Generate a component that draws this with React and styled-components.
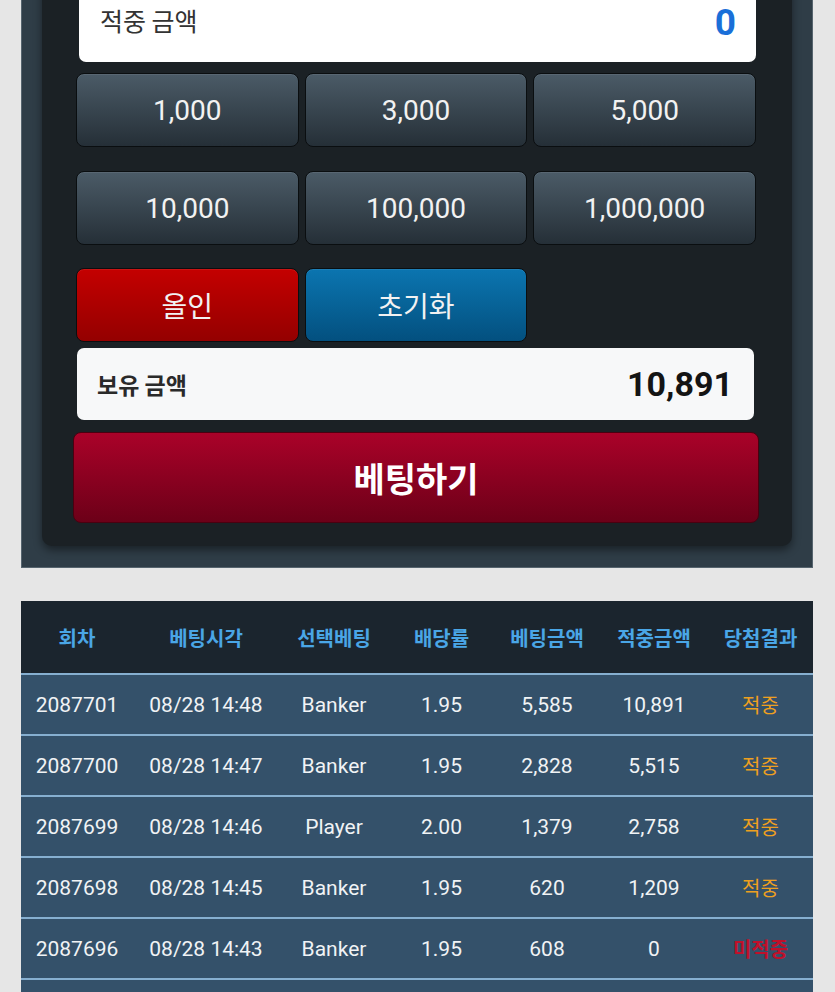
import React from 'react'
import styled, { createGlobalStyle } from 'styled-components';

const GlobalStyle = createGlobalStyle`
html, body {
  margin: 0;
  padding: 0;
  background: #e6e6e6;
}
body {
  font-family: Roboto, 'Noto Sans CJK KR', sans-serif;
}
`;

const Page = styled.div`
display : flex;
flex-direction: column;
gap : 33px;
padding : 0 22px 0 21px;
margin-top : -58px;
`;

const OuterPanel = styled.div`
background: #2f3d47;
border: 1px solid #56646e;
border-top: none;
padding : 20px 20px 21px 20px;
`;

const InnerPanel = styled.div`
display : flex;
flex-direction: column;
background: #1b2125;
border-radius: 0 0 10px 10px;
box-shadow: 0 4px 8px rgba(0,0,0,0.45);
padding : 20px 36px 23px 34px;
`;

const WinBox = styled.div`
display : flex;
align-items : center;
justify-content : space-between;
height : 80px;
margin-left : 3px;
background: #FFFFFF;
border-radius: 0 0 7px 7px;
padding : 0 20px 0 21px;
box-sizing : border-box;
`;

const WinLabel = styled.div`
font-family: 'Noto Sans CJK KR', sans-serif;
font-size: 25px;
color: #333333;
margin-top : -4px;
`;

const WinValue = styled.div`
font-family: Roboto, sans-serif;
font-weight: 700;
font-size: 37px;
color: #1a6fd8;
`;

const ChipGrid = styled.div`
display : grid;
grid-template-columns: repeat(3, 1fr);
gap : 6px;
margin-top : ${p => p.$top}px;
`;

const ChipButton = styled.button`
height : 74px;
border: 1px solid #0a0e10;
border-radius: 8px;
background: ${p => p.$tone === 'red'
  ? 'linear-gradient(#c40000, #940000)'
  : p.$tone === 'blue'
    ? 'linear-gradient(#0b75b0, #03507f)'
    : 'linear-gradient(#4b5b67, #252f37)'};
color: #f2f2f2;
font-family: Roboto, 'Noto Sans CJK KR', sans-serif;
font-size: 28px;
box-shadow: inset 0 1px 0 rgba(255,255,255,0.08);
padding : 0;
cursor : pointer;
`;

const HoldBox = styled.div`
display : flex;
align-items : center;
justify-content : space-between;
height : 72px;
margin : 6px 2px 0 1px;
background: #f7f8f9;
border-radius: 7px;
padding : 0 21px 0 20px;
box-sizing : border-box;
`;

const HoldLabel = styled.div`
font-family: 'Noto Sans CJK KR', sans-serif;
font-weight: 700;
font-size: 23px;
color: #2a2a2a;
`;

const HoldValue = styled.div`
font-family: Roboto, sans-serif;
font-weight: 700;
font-size: 34px;
color: #141414;
`;

const BetButton = styled.button`
height : 91px;
margin : 12px -3px 0 -3px;
border: 1px solid #4a0010;
border-radius: 8px;
background: linear-gradient(#aa0229, #6c0018);
color: #FFFFFF;
font-family: 'Noto Sans CJK KR', sans-serif;
font-weight: 700;
font-size: 34px;
cursor : pointer;
`;

const Table = styled.div`
display : flex;
flex-direction: column;
background: #34516a;
`;

const Row = styled.div`
display : grid;
grid-template-columns: 112px 146px 110px 105px 106px 108px 105px;
align-items : center;
height : ${p => p.$head ? 72 : 59}px;
background: ${p => p.$head ? '#1b252e' : 'transparent'};
border-bottom: 2px solid #86afd0;
`;

const Cell = styled.div`
text-align : center;
font-family: ${p => p.$head ? "'Noto Sans CJK KR'" : "Roboto, 'Noto Sans CJK KR'"}, sans-serif;
font-weight: ${p => p.$head ? 700 : 400};
font-size: ${p => p.$head ? 20 : 21}px;
color: ${p => p.$head ? '#4aa6e6' : '#f0f3f5'};
white-space : nowrap;
`;

const Result = styled(Cell)`
font-family: 'Noto Sans CJK KR', sans-serif;
font-size: 20px;
font-weight: ${p => p.$win ? 400 : 700};
color: ${p => p.$win ? '#eea020' : '#c0102a'};
`;

const chips = ['1,000', '3,000', '5,000'];
const chips2 = ['10,000', '100,000', '1,000,000'];
const headers = ['회차', '베팅시각', '선택베팅', '배당률', '베팅금액', '적중금액', '당첨결과'];
const rows = [
  ['2087701', '08/28 14:48', 'Banker', '1.95', '5,585', '10,891', true],
  ['2087700', '08/28 14:47', 'Banker', '1.95', '2,828', '5,515', true],
  ['2087699', '08/28 14:46', 'Player', '2.00', '1,379', '2,758', true],
  ['2087698', '08/28 14:45', 'Banker', '1.95', '620', '1,209', true],
  ['2087696', '08/28 14:43', 'Banker', '1.95', '608', '0', false],
  ['2087695', '08/28 14:42', 'Banker', '1.95', '600', '0', false],
];

export default function App() {
  return (
    <>
      <GlobalStyle />
      <Page>
        <OuterPanel>
          <InnerPanel>
            <WinBox>
              <WinLabel>적중 금액</WinLabel>
              <WinValue>0</WinValue>
            </WinBox>
            <ChipGrid $top={11}>
              {chips.map(c => <ChipButton key={c}>{c}</ChipButton>)}
            </ChipGrid>
            <ChipGrid $top={24}>
              {chips2.map(c => <ChipButton key={c}>{c}</ChipButton>)}
            </ChipGrid>
            <ChipGrid $top={23}>
              <ChipButton $tone="red">올인</ChipButton>
              <ChipButton $tone="blue">초기화</ChipButton>
            </ChipGrid>
            <HoldBox>
              <HoldLabel>보유 금액</HoldLabel>
              <HoldValue>10,891</HoldValue>
            </HoldBox>
            <BetButton>베팅하기</BetButton>
          </InnerPanel>
        </OuterPanel>
        <Table>
          <Row $head>
            {headers.map(h => <Cell $head key={h}>{h}</Cell>)}
          </Row>
          {rows.map(r => (
            <Row key={r[0]}>
              {r.slice(0, 6).map((v, i) => <Cell key={i}>{v}</Cell>)}
              <Result $win={r[6]}>{r[6] ? '적중' : '미적중'}</Result>
            </Row>
          ))}
        </Table>
      </Page>
    </>
  )
}
